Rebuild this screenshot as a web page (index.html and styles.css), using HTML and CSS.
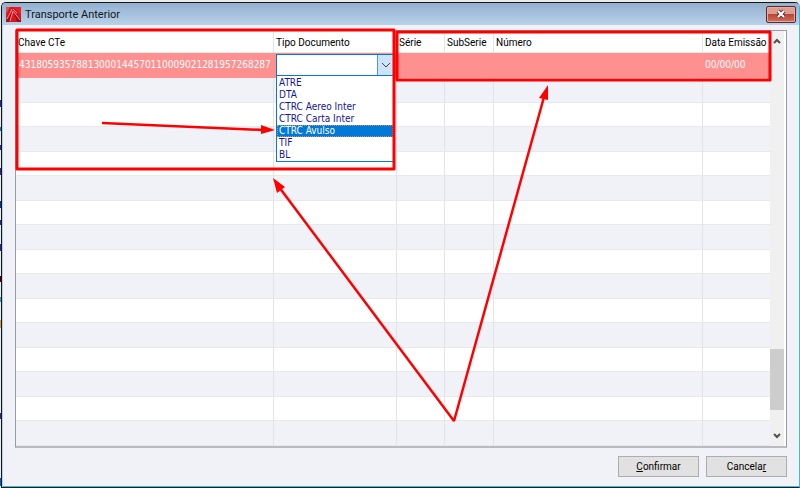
FILE: index.html
```html
<!DOCTYPE html>
<html lang="pt-BR">
<head>
<meta charset="utf-8">
<title>Transporte Anterior</title>
<link rel="stylesheet" href="styles.css">
</head>
<body>
<main class="window">
  <header class="titlebar">
    <svg class="app-icon" viewBox="0 0 15 15" aria-hidden="true">
      <rect width="15" height="15" fill="#d8161f"/>
      <path d="M0 0h4L0 7z" fill="#f0474c"/>
      <path d="M8 0h7v8z" fill="#f01c26"/>
      <path d="M0 15L4 4l2 4-3 7zM8 6l7 6v3h-4z" fill="#9c0e16"/>
      <path d="M1 12L6 2M4 14L7 4l7 9M7 2l4 4" stroke="#f58f92" fill="none"/>
    </svg>
    <h1 class="title">Transporte Anterior</h1>
    <button class="close" type="button" aria-label="Fechar">
      <svg viewBox="0 0 12 10" aria-hidden="true"><path d="M3 2l6 6M9 2L3 8" stroke="#5c3535" stroke-width="4"/><path d="M3 2l6 6M9 2L3 8" stroke="#fff" stroke-width="2"/></svg>
    </button>
  </header>
  <section class="content">
    <div class="grid-frame">
      <table class="grid">
        <colgroup><col class="c-key"><col class="c-type"><col class="c-small"><col class="c-sub"><col class="c-number"><col class="c-date"></colgroup>
        <thead><tr><th>Chave CTe</th><th>Tipo Documento</th><th>Série</th><th>SubSerie</th><th>Número</th><th>Data Emissão</th></tr></thead>
        <tbody>
          <tr class="current">
            <td>43180593578813000144570110009021281957268287</td>
            <td class="type-cell">
              <div class="combo">
                <select class="combo-field" aria-label="Tipo Documento"><option></option></select>
                <span class="combo-arrow"><svg viewBox="0 0 10 6" aria-hidden="true"><path d="M1 1l4 4 4-4" fill="none" stroke="#444"/></svg></span>
                <ul class="combo-list" role="listbox" aria-label="Tipo Documento">
                  <li role="option">ATRE</li><li role="option">DTA</li><li role="option">CTRC Aereo Inter</li><li role="option">CTRC Carta Inter</li><li role="option" class="selected" aria-selected="true">CTRC Avulso</li><li role="option">TIF</li><li role="option">BL</li>
                </ul>
              </div>
            </td>
            <td></td><td></td><td></td><td>00/00/00</td>
          </tr>
          <tr><td></td><td></td><td></td><td></td><td></td><td></td></tr>
          <tr><td></td><td></td><td></td><td></td><td></td><td></td></tr>
          <tr><td></td><td></td><td></td><td></td><td></td><td></td></tr>
          <tr><td></td><td></td><td></td><td></td><td></td><td></td></tr>
          <tr><td></td><td></td><td></td><td></td><td></td><td></td></tr>
          <tr><td></td><td></td><td></td><td></td><td></td><td></td></tr>
          <tr><td></td><td></td><td></td><td></td><td></td><td></td></tr>
          <tr><td></td><td></td><td></td><td></td><td></td><td></td></tr>
          <tr><td></td><td></td><td></td><td></td><td></td><td></td></tr>
          <tr><td></td><td></td><td></td><td></td><td></td><td></td></tr>
          <tr><td></td><td></td><td></td><td></td><td></td><td></td></tr>
          <tr><td></td><td></td><td></td><td></td><td></td><td></td></tr>
          <tr><td></td><td></td><td></td><td></td><td></td><td></td></tr>
          <tr><td></td><td></td><td></td><td></td><td></td><td></td></tr>
          <tr><td></td><td></td><td></td><td></td><td></td><td></td></tr>
        </tbody>
      </table>
      <div class="scrollbar" aria-hidden="true">
        <svg class="scroll-arrow" viewBox="0 0 8 6"><path d="M1 5l3-3 3 3" fill="none" stroke="#505050" stroke-width="2"/></svg>
        <div class="scroll-track"><div class="scroll-thumb"></div></div>
        <svg class="scroll-arrow" viewBox="0 0 8 6"><path d="M1 1l3 3 3-3" fill="none" stroke="#505050" stroke-width="2"/></svg>
      </div>
    </div>
    <footer class="actions">
      <button class="action" type="button"><u>C</u>onfirmar</button>
      <button class="action" type="button">Cancela<u>r</u></button>
    </footer>
  </section>
</main>
<svg class="annotations" viewBox="0 0 800 488" preserveAspectRatio="none" aria-hidden="true">
  <g fill="none" stroke="#fe0000" stroke-width="3" stroke-linejoin="round">
    <rect x="17" y="30" width="377" height="139"/>
    <rect x="397" y="32" width="373" height="48"/>
    <path d="M102 123l162 7M279 187l175 234 90-324" stroke-linejoin="bevel" stroke-width="2.5"/>
  </g>
  <g fill="#fe0000">
    <path d="M275 130l-14-5v9z"/>
    <path d="M273 178l4 15 8-6z"/>
    <path d="M548 85l-9 13 9 2z"/>
  </g>
</svg>
</body>
</html>
```
FILE: styles.css
```css
* { box-sizing: border-box; }

body {
  margin: 0;
  min-height: 100vh;
  display: flex;
  padding: 2px 0 0 1px;
  font: 10px/14px Roboto, sans-serif;
  color: #000;
  background:
    linear-gradient(#2b2b90 0 0) 0 100px / 1px 7px no-repeat,
    linear-gradient(#0878d8 0 0) 0 127px / 1px 4px no-repeat,
    linear-gradient(#2b2b90 0 0) 0 145px / 1px 5px no-repeat,
    linear-gradient(#2b2b90 0 0) 0 168px / 1px 7px no-repeat,
    linear-gradient(#003890 0 0) 0 201px / 1px 7px no-repeat,
    linear-gradient(#2b2b90 0 0) 0 220px / 1px 5px no-repeat,
    linear-gradient(#2b2b90 0 0) 0 244px / 1px 7px no-repeat,
    linear-gradient(#500000 0 0) 0 276px / 1px 6px no-repeat,
    linear-gradient(#40a0a0 0 0) 0 297px / 1px 5px no-repeat,
    linear-gradient(#e0a030 0 0) 0 320px / 1px 8px no-repeat,
    linear-gradient(#2b2b90 0 0) 0 413px / 1px 6px no-repeat,
    linear-gradient(#0060c0 0 0) 0 478px / 1px 8px no-repeat,
    #e8ebe6;
}

.window {
  flex: 1;
  display: flex;
  flex-direction: column;
  border: 1px solid #10171c;
  border-right-color: #38bce0;
  border-radius: 5px 5px 0 0;
  background: #f1f2f8;
  box-shadow: inset 1px 0 #b9d0e8, inset 0 -1px #30c4e4;
  overflow: hidden;
}

.titlebar {
  display: flex;
  align-items: center;
  gap: 4px;
  height: 22px;
  padding: 0 3px 0 4px;
  background: linear-gradient(#93b0cf, #b9d1ea);
}
.app-icon { width: 15px; height: 15px; }
.title { flex: 1; margin: 0; padding-top: 2px; font: 11px/16px Roboto, sans-serif; color: #101820; }
.close {
  display: grid;
  place-items: center;
  width: 30px;
  height: 17px;
  padding: 0;
  border: 1px solid #5f2a2e;
  border-radius: 2px;
  background: linear-gradient(#dc9c90 0 45%, #bd4434 50%, #cf705c);
  box-shadow: inset 0 0 0 1px #e5aaa0;
}
.close svg { width: 12px; height: 10px; }

.content {
  flex: 1;
  display: flex;
  flex-direction: column;
  padding: 5px 12px 10px 13px;
}
.grid-frame {
  flex: 1;
  display: flex;
  border: 1px solid #989ca5;
  border-bottom: 2px solid #b9bbc1;
  background: #fff;
}
.grid {
  flex: 1;
  width: 100%;
  border-collapse: separate;
  border-spacing: 0;
  table-layout: fixed;
}
.c-key { width: 258px; }
.c-type { width: 123px; }
.c-small { width: 48px; }
.c-sub { width: 49px; }
.c-date { width: 67px; }
th, td {
  padding: 0 3px;
  border-right: 1px solid #e4e4e6;
  border-bottom: 1px solid #e9e9eb;
  white-space: nowrap;
  text-align: left;
}
th:last-child, td:last-child { border-right: 0; padding-left: 2px; }
th { height: 22px; padding: 3px 2px 0; font-weight: 400; }
td { height: 24px; font: 10px/14px "DejaVu Sans Condensed", "DejaVu Sans", sans-serif; }
tr:nth-child(even) td { height: 25px; background: #f1f2f8; }
.current td { height: 25px; padding-bottom: 1px; border-color: #ff9090; background: #ff9090; color: #fff; }
.current .type-cell { padding: 0 2px 1px; }

.combo { position: relative; display: flex; height: 22px; border: 1px solid #0878d8; background: #fff; }
.combo-field { flex: 1; min-width: 0; padding: 0; border: 0; background: #fff; appearance: none; font: inherit; }
.combo-arrow { display: grid; place-items: center; width: 16px; border-left: 1px solid #5597c7; background: #cce4f7; pointer-events: none; }
.combo-arrow svg { width: 10px; height: 6px; }
.combo-list {
  position: absolute;
  top: 100%;
  left: -1px;
  right: -1px;
  margin: 0;
  padding: 1px 0 0;
  border: 1px solid #0878d8;
  background: #fff;
  color: #1414a0;
  list-style: none;
  line-height: 12px;
}
.combo-list li { padding-left: 2px; }
.combo-list .selected { background: #0078d7; color: #fff; outline: 1px dotted #c69462; outline-offset: -1px; }

.scrollbar { display: flex; flex-direction: column; align-items: center; width: 16px; padding: 7px 0; border-right: 2px solid #fff; background: #f0f0f0; }
.scroll-arrow { width: 8px; height: 6px; }
.scroll-track { flex: 1; width: 100%; display: flex; flex-direction: column; justify-content: flex-end; padding-bottom: 23px; }
.scroll-thumb { height: 61px; background: #cdcdcd; }

.actions { display: flex; justify-content: flex-end; gap: 7px; padding-top: 8px; }
.action { width: 81px; height: 21px; padding: 0; border: 1px solid #adadad; background: #e1e1e1; color: #000; font: inherit; }

.annotations { position: absolute; inset: 0; width: 100%; height: 100%; pointer-events: none; }
```
